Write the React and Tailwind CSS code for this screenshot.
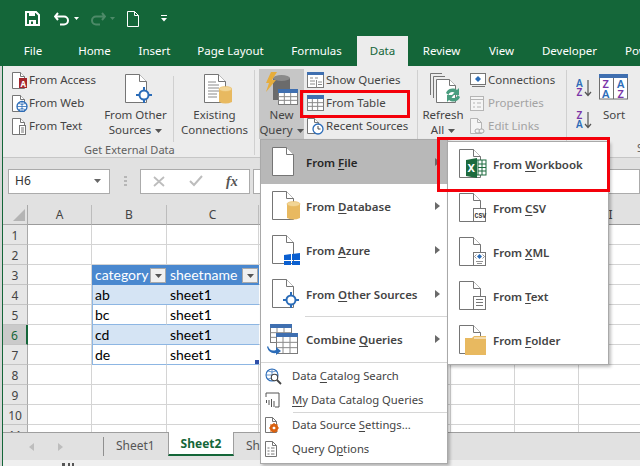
import React from 'react';

const LINE = '#757575';

const Page = ({ w = 21, h = 28, fold = 7 }) => (
  <>
    <path d={`M.5.5H${w - fold}.5L${w}.5 ${fold}.5V${h}.5H.5Z`} fill="#fff" stroke={LINE} />
    <path d={`M${w - fold}.5.5V${fold}.5H${w}.5`} fill="#fff" stroke={LINE} />
  </>
);

const Cylinder = ({ x, y, w = 13, h = 17, fill = '#e8b960', top = '#f2d595' }) => (
  <>
    <path d={`M${x} ${y + 2}V${y + h - 2}Q${x + w / 2} ${y + h + 1} ${x + w} ${y + h - 2}V${y + 2}Z`} fill={fill} />
    <ellipse cx={x + w / 2} cy={y + 2} rx={w / 2} ry="2.5" fill={top} stroke={fill} strokeWidth=".6" />
  </>
);

const Target = ({ cx, cy }) => (
  <>
    <path d={`M${cx - 8} ${cy}H${cx + 8}M${cx} ${cy - 8}V${cy + 8}`} stroke="#2b6cb8" strokeWidth="2" />
    <circle cx={cx} cy={cy} r="4.5" fill="#fff" stroke="#2b6cb8" strokeWidth="2" />
  </>
);

const TableGlyph = ({ x = 0, y = 0, w = 17, h = 15, head = '#3f6fb0' }) => (
  <g transform={`translate(${x} ${y})`}>
    <rect x=".5" y=".5" width={w} height={h} fill="#fff" stroke="#7b7b7b" />
    <rect x="0" y="0" width={w + 1} height="4" fill={head} />
    <path
      d={`M.5 ${4 + (h - 4) / 3}H${w}M.5 ${4 + ((h - 4) * 2) / 3}H${w}M${w / 3} 4V${h}M${(w * 2) / 3} 4V${h}`}
      stroke="#8a8a8a"
      fill="none"
    />
  </g>
);

const Caret = ({ color = '#555' }) => (
  <svg width="7" height="4" className="inline-block ml-1 align-middle">
    <path d="M0 0H7L3.5 4Z" fill={color} />
  </svg>
);

const icons = {
  access: (
    <svg width="15" height="17">
      <Page w={12} h={16} fold={4} />
      <rect x="7" y="6" width="8" height="10" fill="#a4262c" />
      <text x="8.5" y="14.5" fontSize="8" fontWeight="700" fill="#fff">A</text>
    </svg>
  ),
  web: (
    <svg width="16" height="17">
      <Page w={12} h={16} fold={4} />
      <circle cx="10" cy="11.5" r="5" fill="#fff" stroke="#2b6cb8" strokeWidth="1.3" />
      <path d="M5 11.5H15M10 6.5V16.5M7 8.5Q10 10.5 13 8.5M7 14.5Q10 12.5 13 14.5" stroke="#2b6cb8" fill="none" strokeWidth=".8" />
    </svg>
  ),
  text: (
    <svg width="15" height="17">
      <Page w={12} h={16} fold={4} />
      <rect x="7.5" y="7.5" width="6" height="9" fill="#fff" stroke={LINE} />
      <path d="M9 10H12M9 12H12M9 14H12" stroke={LINE} />
    </svg>
  ),
  other: (
    <svg width="28" height="31">
      <Page />
      <Target cx={19} cy={21} />
    </svg>
  ),
  existing: (
    <svg width="28" height="31">
      <Page />
      <path d="M4 8H12M4 11H15M4 14H15M4 17H15M4 20H13M4 23H13" stroke="#8a8a8a" />
      <Cylinder x={15} y={13} h={17} />
    </svg>
  ),
  newQuery: (
    <svg width="34" height="34">
      <path d="M8 6H25V28H8Z" fill="#6b6b6b" />
      <ellipse cx="16.500" cy="6" rx="8.500" ry="3" fill="#8a8a8a" />
      <path d="M6 0H12L7 8H11L1 20L4 11H1Z" fill="#e6ad3c" />
      <TableGlyph x={13} y={17} w={19} h={15} />
    </svg>
  ),
  show: (
    <svg width="18" height="17">
      <rect x=".5" y=".5" width="16" height="15" fill="#fff" stroke="#7b7b7b" />
      <rect x="0" y="0" width="17" height="3" fill="#3f6fb0" />
      <path d="M3 6H6M8 6H11M3 9H8M3 12H8M9.5 8V15.5M11 10H15M11 12.500H15" stroke="#8a8a8a" />
    </svg>
  ),
  table: (
    <svg width="18" height="17">
      <TableGlyph x={0} y={0} w={16} h={15} />
    </svg>
  ),
  recent: (
    <svg width="17" height="17">
      <Page w={11} h={15} fold={4} />
      <circle cx="11" cy="11" r="5" fill="#fff" stroke="#2b6cb8" strokeWidth="1.3" />
      <path d="M11 8V11H13.500" stroke="#444" fill="none" />
    </svg>
  ),
  refresh: (
    <svg width="31" height="32">
      <path d="M.5 22V.5H12" fill="none" stroke={LINE} />
      <path d="M3.500 25V3.500H15" fill="none" stroke={LINE} />
      <g transform="translate(6 6)">
        <Page w={19} h={23} fold={6} />
      </g>
      <path d="M16 20A7 7 0 0 1 27 17L29 15V22H22L24.500 19.500A4 4 0 0 0 18.500 22Z" fill="#4a9d7f" />
      <path d="M30 24A7 7 0 0 1 19 27L17 29V22H24L21.500 24.500A4 4 0 0 0 27.500 22Z" fill="#4a9d7f" />
    </svg>
  ),
  connections: (
    <svg width="17" height="15">
      <rect x=".5" y=".5" width="15" height="11" fill="#fff" stroke={LINE} />
      <path d="M8 3L11 6L8 9L5 6Z" fill="#2b6cb8" />
      <path d="M2 13.500H15" stroke={LINE} />
    </svg>
  ),
  properties: (
    <svg width="15" height="16">
      <rect x=".5" y=".5" width="13" height="14" fill="#f5f5f5" stroke="#b5b5b5" />
      <path d="M.5 3.500H13.500M3 7H5M7 7H11M3 11H5M7 11H11" stroke="#b5b5b5" />
    </svg>
  ),
  links: (
    <svg width="16" height="17">
      <path d="M.5.5H7.500L11.500 4.500V15.500H.5Z" fill="#f5f5f5" stroke="#b5b5b5" />
      <path d="M7.500.5V4.500H11.500" fill="none" stroke="#b5b5b5" />
      <rect x="5" y="11" width="5" height="4" rx="2" fill="#f5f5f5" stroke="#a8a8a8" />
      <rect x="9" y="11" width="5" height="4" rx="2" fill="#f5f5f5" stroke="#a8a8a8" />
    </svg>
  ),
  az: (
    <svg width="16" height="18" fontFamily="'Noto Sans', sans-serif" fontSize="10" fontWeight="600">
      <text x="0" y="8" fill="#2b6cb8">A</text>
      <text x=".5" y="17" fill="#7a35a8">Z</text>
      <path d="M12 1V16M9 13L12 16.500L15 13" fill="none" stroke="#555" strokeWidth="1.200" />
    </svg>
  ),
  za: (
    <svg width="16" height="18" fontFamily="'Noto Sans', sans-serif" fontSize="10" fontWeight="600">
      <text x=".5" y="8" fill="#7a35a8">Z</text>
      <text x="0" y="17" fill="#2b6cb8">A</text>
      <path d="M12 1V16M9 13L12 16.500L15 13" fill="none" stroke="#555" strokeWidth="1.200" />
    </svg>
  ),
  sort: (
    <svg width="30" height="26" fontFamily="'Noto Sans', sans-serif" fontSize="11" fontWeight="600">
      <rect x=".5" y=".5" width="28" height="24.500" fill="#fff" stroke="#6f6f6f" />
      <rect x="0" y="0" width="29" height="4" fill="#3f6fb0" />
      <path d="M14.500 4V25" stroke="#6f6f6f" />
      <text x="3.500" y="14" fill="#7a35a8">Z</text>
      <text x="3" y="24" fill="#2b6cb8">A</text>
      <text x="18" y="14" fill="#2b6cb8">A</text>
      <text x="18.500" y="24" fill="#7a35a8">Z</text>
    </svg>
  ),
  file: (
    <svg width="30" height="30">
      <Page />
    </svg>
  ),
  database: (
    <svg width="30" height="30">
      <Page />
      <Cylinder x={15} y={11} h={18} />
    </svg>
  ),
  azure: (
    <svg width="30" height="30">
      <Page />
      <path d="M12 20L19 19V25H12ZM20 19L28 18V25H20ZM12 26H19V31L12 30ZM20 26H28V30H20Z" fill="#0a5fd0" />
    </svg>
  ),
  otherSrc: (
    <svg width="30" height="30">
      <Page />
      <Target cx={19} cy={21} />
    </svg>
  ),
  combine: (
    <svg width="32" height="32">
      <TableGlyph x={3} y={0} w={21} h={18} />
      <TableGlyph x={9} y={9} w={21} h={20} />
      <path d="M1 22Q3 28 9 26V23L14 27L9 31V29Q2 30 0 23Z" fill="#2b6cb8" />
    </svg>
  ),
  search: (
    <svg width="17" height="17">
      <circle cx="7" cy="7" r="6" fill="#fff" stroke="#2b6cb8" strokeWidth="1.100" />
      <path d="M1 7H13M7 1V13M3 3Q7 5 11 3M3 11Q7 9 11 11" fill="none" stroke="#2b6cb8" strokeWidth=".7" />
      <circle cx="9.500" cy="9.500" r="3.200" fill="#fff" stroke="#444" strokeWidth="1.100" />
      <path d="M12 12L16 16" stroke="#444" strokeWidth="1.800" />
    </svg>
  ),
  catalog: (
    <svg width="16" height="16">
      <path d="M1 5V1H14V15H10" fill="none" stroke="#555" />
      <path d="M1.500 8V11M4 8V13M6.500 7V15M9 9V15" stroke="#555" />
    </svg>
  ),
  settings: (
    <svg width="15" height="17">
      <path d="M.5.5H7.500L11.500 4.500V15.500H.5Z" fill="#fff" stroke={LINE} />
      <path d="M7.500.5V4.500H11.500" fill="none" stroke={LINE} />
      <circle cx="9" cy="11" r="3.200" fill="none" stroke="#d9600f" strokeWidth="2" />
      <path d="M9 6V16M4 11H14M5.500 7.500L12.500 14.500M12.500 7.500L5.500 14.500" stroke="#d9600f" strokeWidth="1.200" />
      <circle cx="9" cy="11" r="1.300" fill="#fff" />
    </svg>
  ),
  options: (
    <svg width="13" height="16">
      <path d="M.5.5H7.500L11.500 4.500V15.500H.5Z" fill="#fff" stroke={LINE} />
      <path d="M7.500.5V4.500H11.500" fill="none" stroke={LINE} />
      <path d="M2.500 7H4.500M6 7H9.500M2.500 10H4.500M6 10H9.500M2.500 13H4.500M6 13H9.500" stroke="#777" />
    </svg>
  ),
  workbook: (
    <svg width="28" height="30">
      <Page />
      <rect x="14" y="11" width="13" height="15" fill="#fff" stroke="#1d6b3e" />
      <path d="M19 11V26M23 11V26M19 15H27M19 18.500H27M19 22H27" stroke="#1d6b3e" />
      <path d="M7 11L18 9V29L7 27Z" fill="#1d6b3e" />
      <text x="8.500" y="23" fontSize="11" fontWeight="700" fill="#fff" fontFamily="'Noto Sans', sans-serif">X</text>
    </svg>
  ),
  csv: (
    <svg width="28" height="30">
      <Page />
      <rect x="14.500" y="15.500" width="12" height="13" fill="#fff" stroke={LINE} />
      <text x="15.500" y="25" fontSize="6.500" fill="#333" fontFamily="'Liberation Mono', monospace">CSV</text>
    </svg>
  ),
  xml: (
    <svg width="28" height="30">
      <Page />
      <rect x="14.500" y="15.500" width="12" height="13" fill="#fff" stroke={LINE} />
      <path d="M20.500 17L23 19.500L20.500 22L18 19.500Z" fill="#2b6cb8" />
      <path d="M17.500 17.500L15.500 19.500L17.500 21.500M23.500 17.500L25.500 19.500L23.500 21.500M17 24.500H24M18 26.500H23" fill="none" stroke="#777" strokeWidth=".8" />
    </svg>
  ),
  txt: (
    <svg width="28" height="30">
      <Page />
      <rect x="14.500" y="15.500" width="12" height="13" fill="#fff" stroke={LINE} />
      <path d="M17 18.500H24M17 21.500H24M17 24.500H24" stroke="#777" />
    </svg>
  ),
  folder: (
    <svg width="28" height="30">
      <Page />
      <path d="M6 13H13L15 11H27V30H6Z" fill="#e8b960" />
      <path d="M15 13H27" stroke="#fff" />
    </svg>
  ),
};

const tabs = [
  { label: 'File', cls: 'w-[60px]' },
  { label: 'Home', cls: 'w-[63px]' },
  { label: 'Insert', cls: 'w-[57px]' },
  { label: 'Page Layout', cls: 'w-[95px]' },
  { label: 'Formulas', cls: 'w-[77px]' },
  { label: 'Data', cls: 'w-[51px] mx-[2px] bg-[#ececec] text-[#146639]' },
  { label: 'Review', cls: 'w-[63px]' },
  { label: 'View', cls: 'w-[57px]' },
  { label: 'Developer', cls: 'w-[79px]' },
  { label: 'Pow', cls: 'w-[31px] pl-[16px] overflow-hidden !justify-start' },
];

const SmallBtn = ({ icon, label, disabled, iw = 'w-[19px]' }) => (
  <div className={`flex items-center h-[23px] whitespace-nowrap ${disabled ? 'text-[#a3a3a3]' : 'text-[#444]'}`}>
    <span className={`flex shrink-0 ${iw}`}>{icon}</span>
    <span className="pb-[2px]">{label}</span>
  </div>
);

const BigBtn = ({ icon, lines, cls = '' }) => (
  <div className={`flex flex-col items-center h-[70px] text-[#444] leading-[15px] whitespace-nowrap ${cls}`}>
    <div className="h-[38px] pt-[5px] pl-[7px] flex justify-center">{icon}</div>
    <div>{lines[0]}</div>
    <div>
      {lines[1]}
      <Caret />
    </div>
  </div>
);

const Sep = ({ cls = '' }) => <div className={`w-px bg-[#d0d0d0] shrink-0 ${cls}`} />;

const Ribbon = () => (
  <div className="flex h-[92px] bg-[#ececec] border-b border-[#c6c6c6] text-[11.5px] relative">
    {/* Get External Data */}
    <div className="w-[251px] shrink-0 flex flex-col">
      <div className="flex pt-[3px] pl-[8px]">
        <div className="w-[92px] shrink-0 pl-[1px]">
          <SmallBtn icon={icons.access} label="From Access" iw="w-[17px]" />
          <SmallBtn icon={icons.web} label="From Web" iw="w-[17px]" />
          <SmallBtn icon={icons.text} label="From Text" iw="w-[17px]" />
        </div>
        <BigBtn icon={icons.other} lines={['From Other', 'Sources']} cls="w-[65px] shrink-0" />
        <Sep cls="h-[66px] mt-[7px] ml-[5px]" />
        <div className="w-[79px] shrink-0 pl-[2px]">
          <div className="flex flex-col items-center h-[70px] text-[#444] leading-[15px] whitespace-nowrap">
            <div className="h-[38px] pt-[5px] pl-[6px]">{icons.existing}</div>
            <div>Existing</div>
            <div>Connections</div>
          </div>
        </div>
      </div>
      <div className="pl-[81px] leading-[16px] text-[11px] text-[#5f5f5f]">Get External Data</div>
    </div>
    <Sep cls="h-[85px] mt-[4px]" />
    {/* Get & Transform */}
    <div className="w-[162px] shrink-0 flex pt-[3px] pl-[4px]">
      <div className="w-[45px] shrink-0 h-[70px] bg-[#c6c6c6] flex flex-col items-center text-[#444] leading-[15px]">
        <div className="h-[38px] pt-[3px]">{icons.newQuery}</div>
        <div>New</div>
        <div className="whitespace-nowrap">
          Query
          <Caret />
        </div>
      </div>
      <div className="pl-[3px]">
        <SmallBtn icon={icons.show} label="Show Queries" />
        <SmallBtn icon={icons.table} label="From Table" />
        <SmallBtn icon={icons.recent} label="Recent Sources" />
      </div>
    </div>
    <Sep cls="h-[85px] mt-[4px]" />
    {/* Connections */}
    <div className="w-[148px] shrink-0 flex pt-[3px] pl-[1px]">
      <div className="w-[48px] shrink-0 flex flex-col items-center h-[70px] text-[#444] leading-[15px]">
        <div className="h-[38px] pt-[4px] pl-[4px]">{icons.refresh}</div>
        <div>Refresh</div>
        <div>
          All
          <Caret />
        </div>
      </div>
      <div className="pl-[3px]">
        <SmallBtn icon={icons.connections} label="Connections" iw="w-[18px]" />
        <SmallBtn icon={icons.properties} label="Properties" iw="w-[18px]" disabled />
        <SmallBtn icon={icons.links} label="Edit Links" iw="w-[18px]" disabled />
      </div>
    </div>
    <Sep cls="h-[85px] mt-[4px]" />
    {/* Sort & Filter */}
    <div className="flex-1 flex flex-col overflow-hidden">
      <div className="flex pl-[9px] h-[75px]">
        <div className="w-[23px] shrink-0 pt-[13px] flex flex-col gap-[14px]">
          {icons.az}
          {icons.za}
        </div>
        <div className="flex flex-col items-center w-[30px] pt-[8px] text-[#444]">
          {icons.sort}
          <div className="mt-[7px] leading-[15px]">Sort</div>
        </div>
        <Sep cls="h-[70px] mt-[5px] ml-[11px]" />
      </div>
      <div className="pl-[70px] leading-[14px] text-[11px] text-[#5f5f5f] whitespace-nowrap">S</div>
    </div>
  </div>
);

const FormulaBar = () => (
  <div className="flex items-center h-[47px] bg-[#e1e1e1] pl-[5px] pb-[1px]">
    <div className="flex items-center justify-between w-[102px] h-[25px] bg-white border border-[#ababab] px-[6px] text-[12px] text-[#333] shrink-0">
      H6
      <svg width="7" height="4" className="mr-[2px]">
        <path d="M0 0H7L3.500 4Z" fill="#666" />
      </svg>
    </div>
    <div className="w-[30px] shrink-0 flex justify-center">
      <svg width="3" height="11">
        <path d="M0 1H3M0 5H3M0 9H3" stroke="#a8a8a8" strokeWidth="1.500" />
      </svg>
    </div>
    <div className="flex items-center w-[110px] h-[25px] bg-white border border-[#ababab] shrink-0 pl-[12px]">
      <svg width="12" height="11" className="mr-[24px]">
        <path d="M1 1L11 10M11 1L1 10" stroke="#bdbdbd" strokeWidth="1.800" />
      </svg>
      <svg width="14" height="12" className="mr-[23px]">
        <path d="M1 6L5 10L13 1" fill="none" stroke="#bdbdbd" strokeWidth="2" />
      </svg>
      <span className="font-['Liberation_Serif',serif] italic font-bold text-[14px] text-[#555]">fx</span>
    </div>
    <div className="flex-1 h-[25px] ml-[3px] bg-white border border-[#ababab]" />
  </div>
);

const columns = ['A', 'B', 'C', 'D', 'E', 'F', 'G', 'H', 'I'];
const rowsNo = [1, 2, 3, 4, 5, 6, 7, 8, 9, 10, 11];
const tableRows = {
  4: ['ab', 'sheet1'],
  5: ['bc', 'sheet1'],
  6: ['cd', 'sheet1'],
  7: ['de', 'sheet1'],
};

const FilterBtn = () => (
  <span className="absolute right-[1px] top-[3px] w-[16px] h-[15px] bg-[#f0f0f0] border border-[#a9a9a9] flex items-center justify-center">
    <svg width="7" height="4">
      <path d="M0 0H7L3.500 4Z" fill="#555" />
    </svg>
  </span>
);

const Cell = ({ row, col }) => {
  const inTable = row >= 3 && row <= 7 && (col === 'B' || col === 'C');
  const isB = col === 'B';
  if (!inTable) return <div className="border-r border-b border-[#d4d4d4] bg-white" />;
  if (row === 3) {
    return (
      <div className="relative bg-[#4a88cf] text-white pl-[3px] text-[14px] leading-[19px] font-['Lato',sans-serif]">
        {isB ? 'category' : 'sheetname'}
        <FilterBtn />
      </div>
    );
  }
  const band = row % 2 === 0;
  return (
    <div
      className={`relative border-b border-b-[#8db6e3] text-[14px] leading-[19px] text-black font-['Lato',sans-serif] ${
        band ? 'bg-[#d5e4f4]' : 'bg-white'
      } ${isB ? 'border-l border-l-[#8db6e3] pl-[2px]' : 'pl-[3px]'} ${isB && !band ? 'border-r border-r-[#d4d4d4]' : ''}`}
    >
      {tableRows[row][isB ? 0 : 1]}
      {row === 7 && !isB && <span className="absolute right-0 bottom-0 w-[4px] h-[4px] bg-[#2f4fa8]" />}
    </div>
  );
};

const Sheet = () => (
  <div className="h-[227px] overflow-hidden grid grid-cols-[25px_64px_75px_92px_64px_64px_64px_64px_64px_64px] grid-rows-[20px_repeat(11,20px)] text-[12px] text-[#444] bg-white">
    <div className="bg-[#e1e1e1] border-r border-b border-[#a9a9a9] flex items-end justify-end pr-[2px] pb-[3px]">
      <svg width="12" height="12">
        <path d="M12 0V12H0Z" fill="#b4b4b4" />
      </svg>
    </div>
    {columns.map((c) => (
      <div key={c} className="bg-[#e1e1e1] border-r border-r-[#bcbcbc] border-b border-b-[#9b9b9b] text-center leading-[20px]">
        {c}
      </div>
    ))}
    {rowsNo.map((r) => (
      <React.Fragment key={r}>
        <div
          className={`border-b border-b-[#c4c4c4] text-center leading-[21px] ${
            r === 6
              ? 'bg-[#cacaca] text-[#146639] border-r-2 border-r-[#146639]'
              : 'bg-[#e6e6e6] border-r border-r-[#a9a9a9]'
          }`}
        >
          {r}
        </div>
        {columns.map((c) => (
          <Cell key={c} row={r} col={c} />
        ))}
      </React.Fragment>
    ))}
  </div>
);

const SheetTabs = () => (
  <div className="flex h-[28px] bg-[#e1e1e1] border-t border-[#9e9e9e] text-[12px] text-[#555]">
    <div className="w-[100px] flex items-center shrink-0 pl-[26px] gap-[24px]">
      <svg width="5" height="8">
        <path d="M5 0V8L0 4Z" fill="#bdbdbd" />
      </svg>
      <svg width="5" height="8">
        <path d="M0 0V8L5 4Z" fill="#bdbdbd" />
      </svg>
    </div>
    <Sep cls="h-[19px] mt-[4px] !bg-[#8f8f8f]" />
    <div className="w-[64px] pl-[12px] leading-[26px] shrink-0">Sheet1</div>
    <div className="w-[66px] h-[24px] -mt-px bg-white border-x border-x-[#9e9e9e] border-b-2 border-b-[#146639] text-[#146639] font-bold text-center leading-[24px] shrink-0">
      Sheet2
    </div>
    <div className="pl-[12px] leading-[26px]">Sh</div>
  </div>
);

const Label = ({ before = '', u, after = '', cls = 'pt-[1px]' }) => (
  <span className={cls}>
    {before}
    <u className="underline-offset-2">{u}</u>
    {after}
  </span>
);

const Arrow = () => (
  <svg width="5" height="8" className="absolute left-[174px] top-[18px]">
    <path d="M0 0V8L5 4Z" fill="#6a6a6a" />
  </svg>
);

const queryItems = [
  { icon: icons.file, label: <Label before="From " u="F" after="ile" />, cls: 'bg-[#b8b8b8] !text-[#262626]' },
  { icon: icons.database, label: <Label before="From " u="D" after="atabase" /> },
  { icon: icons.azure, label: <Label before="From " u="A" after="zure" /> },
  { icon: icons.otherSrc, label: <Label before="From " u="O" after="ther Sources" /> },
];

const MenuSmall = ({ icon, label }) => (
  <div className="flex items-center h-[24px] pl-[4px] whitespace-nowrap">
    <span className="w-[27px] shrink-0 flex">{icon}</span>
    {label}
  </div>
);

const NewQueryMenu = () => (
  <div className="absolute left-[260px] top-[139px] w-[188px] h-[325px] bg-white border border-[#a9a9a9] shadow-[2px_2px_3px_rgba(0,0,0,0.25)] text-[11.5px] text-[#444] z-10">
    {queryItems.map((it, i) => (
      <div key={i} className={`relative flex items-center h-[44px] pl-[11px] font-semibold ${it.cls || ''}`}>
        <span className="w-[34px] shrink-0 flex">{it.icon}</span>
        {it.label}
        <Arrow />
      </div>
    ))}
    <div className="ml-[44px] h-px bg-[#d6d6d6]" />
    <div className="relative flex items-center h-[45px] pl-[6px] font-semibold">
      <span className="w-[39px] shrink-0 flex">{icons.combine}</span>
      <Label before="Combine " u="Q" after="ueries" cls="" />
      <Arrow />
    </div>
    <div className="h-px bg-[#d6d6d6]" />
    <div className="pt-[1px] text-[11.25px]">
      <MenuSmall icon={icons.search} label={<Label before="Data " u="C" after="atalog Search" />} />
      <MenuSmall icon={icons.catalog} label={<Label u="M" after="y Data Catalog Queries" />} />
      <div className="ml-[32px] h-px bg-[#d6d6d6]" />
      <MenuSmall icon={icons.settings} label={<Label before="Data Source " u="S" after="ettings..." />} />
      <MenuSmall icon={icons.options} label={<Label before="Query O" u="p" after="tions" />} />
    </div>
  </div>
);

const fileItems = [
  { icon: icons.workbook, label: <Label before="From " u="W" after="orkbook" /> },
  { icon: icons.csv, label: <Label before="From " u="C" after="SV" /> },
  { icon: icons.xml, label: <Label before="From " u="X" after="ML" /> },
  { icon: icons.txt, label: <Label before="From " u="T" after="ext" /> },
  { icon: icons.folder, label: <Label before="From " u="F" after="older" /> },
];

const FileMenu = () => (
  <div className="absolute left-[447px] top-[141px] w-[162px] h-[224px] bg-white border border-[#a9a9a9] shadow-[2px_2px_3px_rgba(0,0,0,0.25)] text-[11.5px] font-semibold text-[#444] z-20">
    {fileItems.map((it, i) => (
      <div key={i} className="flex items-center h-[44px] pl-[11px]">
        <span className="w-[34px] shrink-0 flex">{it.icon}</span>
        {it.label}
      </div>
    ))}
  </div>
);

export default function App() {
  return (
    <div className="relative w-[640px] h-[466px] overflow-hidden bg-white font-['Noto_Sans',sans-serif]">
      {/* title + tabs */}
      <div className="h-[66px] bg-[#146639] text-white text-[11.5px]">
        <div className="flex items-center h-[36px] pl-[25px] pt-[1px]">
          <svg width="15" height="15" className="mr-[14px]">
            <path d="M1 1H11L14 4V14H1Z" fill="none" stroke="#fff" strokeWidth="2" />
            <path d="M4 1H10V5H4Z" fill="#fff" />
            <path d="M4 9H11V14H4Z" fill="#fff" />
            <path d="M6 10.500H8V13H6Z" fill="#146639" />
          </svg>
          <svg width="16" height="14" className="mr-[4px]">
            <path d="M4 1L1 4.500L4 8M1.500 4.500H10A4 4 0 0 1 10 12.500H6" fill="none" stroke="#fff" strokeWidth="2" />
          </svg>
          <svg width="5" height="3" className="mr-[11px]">
            <path d="M0 0H5L2.500 3Z" fill="#fff" />
          </svg>
          <svg width="16" height="14" className="mr-[4px]">
            <path d="M12 1L15 4.500L12 8M14.500 4.500H6A4 4 0 0 0 6 12.500H10" fill="none" stroke="#4d8a68" strokeWidth="2" />
          </svg>
          <svg width="5" height="3" className="mr-[12px]">
            <path d="M0 0H5L2.500 3Z" fill="#4d8a68" />
          </svg>
          <svg width="12" height="16" className="mr-[22px]">
            <path d="M.5.5H7.500L11.500 4.500V15.500H.5Z" fill="none" stroke="#fff" />
            <path d="M7.500.5V4.500H11.500" fill="none" stroke="#fff" />
          </svg>
          <svg width="6" height="7">
            <path d="M0 .5H6" stroke="#fff" />
            <path d="M0 3H6L3 6.500Z" fill="#fff" />
          </svg>
        </div>
        <div className="flex h-[30px] pl-[3px] items-stretch">
          {tabs.map((t) => (
            <div key={t.label} className={`shrink-0 flex items-center justify-center whitespace-nowrap ${t.cls}`}>
              {t.label}
            </div>
          ))}
        </div>
      </div>
      <div className="flex">
        <div className="w-[3px] shrink-0 bg-[#d6d6d6] border-r border-[#146639]" />
        <div className="flex-1 min-w-0">
          <Ribbon />
          <FormulaBar />
          <Sheet />
          <SheetTabs />
          <div className="h-[6px] bg-[#efefef] pl-[59px] pt-[3px] flex">
            <svg width="12" height="3">
              <path d="M0 0H3V3H0ZM6 0H8V3H6ZM10 0H12V3H10Z" fill="#555" />
            </svg>
          </div>
        </div>
      </div>
      <NewQueryMenu />
      <FileMenu />
      {/* red highlight boxes */}
      <div className="absolute left-[300px] top-[90px] w-[110px] h-[28px] border-[3px] border-[#f4000a] z-30" />
      <div className="absolute left-[437px] top-[137px] w-[173px] h-[55px] border-[3px] border-[#f4000a] z-30" />
    </div>
  );
}
